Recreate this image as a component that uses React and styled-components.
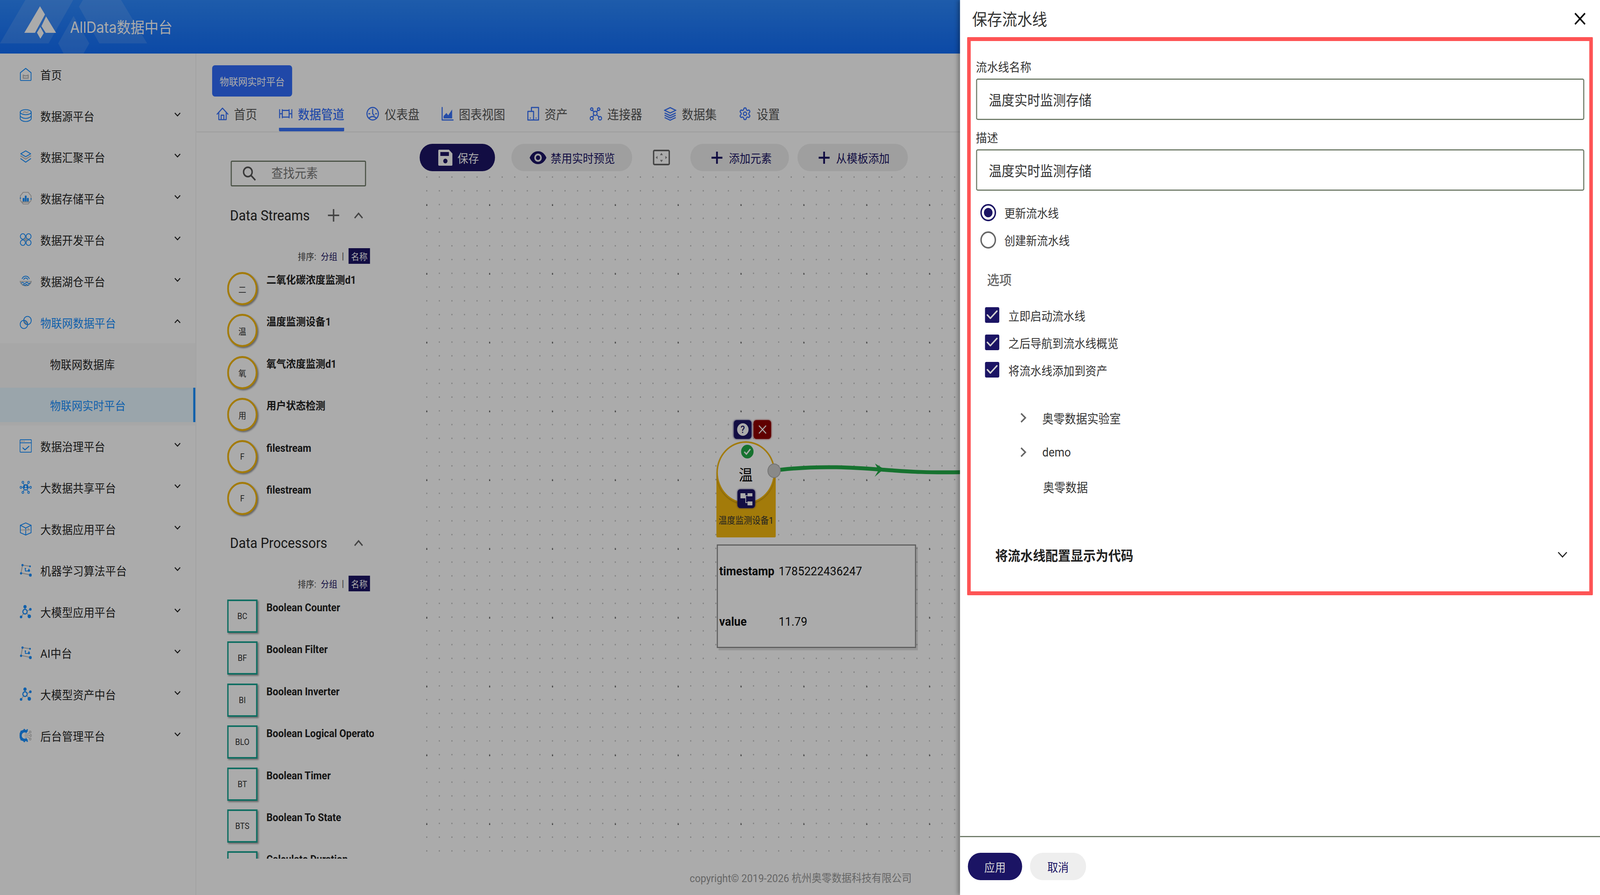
import React from 'react';
import styled, { createGlobalStyle } from 'styled-components';
import { Check, Settings } from 'lucide-react';

const BLUE = '#1890ff';
const GREY = '#bfbfbf';
const NAVY = '#1b1464';
const TAB = '#3a74fb';
const GOLD = '#f3b80f';
const TEAL = '#17a493';
const FIELD = '#6f7b68';
const SANS = 'Roboto, "Noto Sans CJK SC", sans-serif';
const DESIGN_WIDTH = 4480;

const Global = createGlobalStyle`
  html, body { margin: 0; padding: 0; background: #fff; overflow: hidden; }
  * { box-sizing: border-box; }
  body { font-family: ${SANS}; color: #262626; }
`;

const Root = styled.div`
  position: relative; width: ${DESIGN_WIDTH}px; height: 2290px; overflow: hidden;
  transform-origin: left top;
  display: flex; flex-direction: column; background: #fff;
`;
const Overlay = styled.div`
  position: absolute; inset: 0; background: rgba(0, 0, 0, 0.33);
`;

/* header */
const Header = styled.header`
  position: relative; flex: none; height: 137px; display: flex; align-items: center;
  background: linear-gradient(180deg, #2d89ff 0%, #126ef8 100%); overflow: hidden;
`;
const HeaderArt = styled.svg`
  position: absolute; left: 0; top: 0; width: 520px; height: 137px;
`;
const Brand = styled.div`
  position: relative; margin-left: 196px; margin-top: -4px; font-family: Inter, "Noto Sans CJK SC", sans-serif;
  font-size: 39px; color: #fff; white-space: nowrap;
`;

/* layout */
const Body = styled.div` flex: 1; min-height: 0; display: flex; `;
const Sidebar = styled.nav`
  flex: none; width: 550px; border-right: 3px solid #f5f5f5; background: #fff;
`;
const MenuRow = styled.div`
  height: 105.8px; padding: 0 41px 0 55px; display: flex; align-items: center; gap: 24px;
  font-size: 30px; letter-spacing: 0.3px; color: ${p => (p.$open ? BLUE : '#262626')};
`;
const MenuIconBox = styled.svg`
  flex: none; width: 34px; height: 34px; fill: none; stroke-width: 2.2;
  stroke-linecap: round; stroke-linejoin: round;
`;
const MenuLabel = styled.span` flex: 1; `;
const MenuCaret = styled.svg`
  flex: none; width: 18px; height: 10px; margin-bottom: 6px; fill: none; stroke: #262626; stroke-width: 2.6;
`;
const SubMenu = styled.div`
  height: 211px; padding: 9px 0 0; background: #fafafa; display: flex; flex-direction: column; gap: 17px;
`;
const SubItem = styled.div`
  height: 88px; padding-left: 140px; display: flex; align-items: center; font-size: 30px; letter-spacing: 0.3px;
  color: ${p => (p.$active ? BLUE : '#262626')};
  background: ${p => (p.$active ? '#e6f7ff' : 'transparent')};
  border-right: 6px solid ${p => (p.$active ? BLUE : 'transparent')};
`;

const Main = styled.main` flex: 1; min-width: 0; display: flex; flex-direction: column; `;
const Chip = styled.div`
  flex: none; align-self: flex-start; margin: 30px 0 0 44px; width: 224px; height: 80px; border-radius: 8px;
  background: #306cfb; color: #fff; font-size: 26px; display: flex; align-items: center; justify-content: center;
`;
const TabBar = styled.div`
  flex: none; height: 92px; padding-left: 56px; display: flex; gap: 61px; border-bottom: 3px solid #f0f0f0;
`;
const Tab = styled.div`
  display: flex; align-items: center; gap: 15px; padding-top: 7px; font-size: 32.5px;
  font-weight: ${p => (p.$active ? 500 : 400)};
  color: ${p => (p.$active ? TAB : '#555')};
  border-bottom: 9px solid ${p => (p.$active ? TAB : 'transparent')};
  border-radius: 0 0 3px 3px;
`;
const TabIconBox = styled.svg`
  flex: none; width: ${p => p.$w || 36}px; height: 36px; fill: none; stroke: ${TAB}; stroke-width: 3;
  stroke-linecap: round; stroke-linejoin: round;
`;

const Workspace = styled.div` flex: 1; min-height: 0; display: flex; `;
const Palette = styled.aside`
  flex: none; width: 625px; padding: 72px 0 0 86px; display: flex; flex-direction: column;
`;
const SearchBox = styled.label`
  flex: none; margin-left: 10px; width: 379px; height: 66px; border: 3px solid ${FIELD}; border-radius: 4px;
  display: flex; align-items: center; gap: 41px; padding-left: 30px; color: #555;
`;
const SearchInput = styled.input`
  width: 220px; border: 0; outline: 0; background: none; font: 32.5px ${SANS}; color: #777;
  &::placeholder { color: #777; }
`;
const SectionHead = styled.div`
  flex: none; height: 60px; margin: ${p => p.$top}px 0 0 8px; width: 373px; display: flex; align-items: center;
  color: #666;
`;
const SectionTitle = styled.h3`
  flex: 1; margin: 0; font-size: 37px; font-weight: 400; color: #262626; white-space: nowrap;
`;
const GlyphSvg = styled.svg`
  flex: none; display: block; fill: none; stroke: currentColor; margin-right: ${p => p.$gap || 0}px;
`;
const SortRow = styled.div`
  flex: none; height: 40px; margin: 54px 0 0; width: 400px; display: flex; align-items: center; justify-content: flex-end;
  gap: 13px; font-size: 23px; color: #444;
`;
const SortLink = styled.span` color: ${NAVY}; `;
const SortActive = styled.span`
  height: 40px; padding: 0 7px; display: flex; align-items: center; background: ${NAVY}; color: #fff;
`;
const ElementList = styled.div`
  flex: none; width: 411px; margin-top: 21px; overflow: hidden; height: ${p => p.$h}px;
`;
const Element = styled.div`
  display: flex; gap: 25px; height: 107.4px; padding-bottom: 22px;
`;
const Thumb = styled.div`
  flex: none; width: 85px; height: 85px; display: flex; align-items: center; justify-content: center;
  font-size: 22px; color: #333; background: #fff;
  border: ${p => (p.$round ? `5px solid ${GOLD}` : `4px solid ${TEAL}`)};
  border-radius: ${p => (p.$round ? '50%' : '0')};
  box-shadow: 3px 3px 4px rgba(0, 0, 0, 0.4);
`;
const ElementName = styled.div`
  flex: 1; min-width: 0; line-height: 42px; font-size: 27.5px; font-weight: 700;
  color: #222; white-space: nowrap; overflow: hidden;
`;

const Stage = styled.section` flex: 1; min-width: 0; display: flex; flex-direction: column; padding-top: 29px; `;
const Toolbar = styled.div` flex: none; display: flex; align-items: center; height: 70px; `;
const ToolBtn = styled.div`
  flex: none; height: 70px; border-radius: 35px; display: flex; align-items: center; white-space: nowrap;
  font-size: 30px; color: ${p => (p.$primary ? '#fff' : NAVY)};
  background: ${p => (p.$primary ? NAVY : '#eeeeee')};
  padding: ${p => p.$pad}; gap: ${p => p.$gap}px; margin-left: ${p => p.$ml || 0}px;
`;
const FitIcon = styled.svg` flex: none; margin: 0 57px 0 58px; `;
const Canvas = styled.div`
  position: relative; flex: 1; min-height: 0; margin: 7px 0 0 15px;
  background-image:
    radial-gradient(circle, #666 0, #666 1.6px, transparent 2.2px),
    radial-gradient(circle, #bbb 0, #bbb 1.5px, transparent 2px);
  background-size: 176px 176px, 35.2px 35.2px;
  background-position: -83px -8px, -12.6px -9.6px;
`;
const Edge = styled.svg`
  position: absolute; left: 990px; top: 725px; width: 520px; height: 70px; overflow: visible;
`;
const NodeWrap = styled.div`
  position: absolute; left: 816px; top: 630px; width: 166px;
  display: flex; flex-direction: column;
`;
const NodeActions = styled.div` display: flex; gap: 6px; margin-left: 49px; `;
const NodeBtn = styled.div`
  width: 49px; height: 48px; border-radius: 8px; display: flex; align-items: center; justify-content: center;
  background: ${p => p.$bg}; box-shadow: 0 0 5px ${p => p.$bg};
`;
const HelpDot = styled.span`
  width: 32px; height: 32px; border-radius: 50%; background: #fff; color: ${NAVY};
  font-size: 25px; font-weight: 500; display: flex; align-items: center; justify-content: center;
`;
const NodeBody = styled.div`
  position: relative; margin-top: 6px; height: 246px; border-radius: 0 0 3px 3px;
  background: linear-gradient(180deg, transparent 80px, ${GOLD} 80px);
`;
const NodeCircle = styled.div`
  position: absolute; left: 0; top: 0; width: 164px; height: 160px; border-radius: 50%;
  border: 4px solid ${GOLD}; background: #fff; box-shadow: 0 2px 3px rgba(0, 0, 0, 0.25);
  display: flex; align-items: center; justify-content: center; font-size: 39px; color: #000; padding-top: 6px;
`;
const NodeStatus = styled.svg` position: absolute; left: 65px; top: 5px; width: 35px; height: 35px; `;
const NodeTree = styled(NodeBtn)` position: absolute; left: 59px; top: 123px; `;
const NodePort = styled.div`
  position: absolute; left: 143px; top: 57px; width: 37px; height: 37px; border-radius: 50%;
  background: #ccc; border: 2px solid #aaa;
`;
const NodeLabel = styled.div`
  position: absolute; left: 0; right: 0; bottom: 28px; text-align: center; font-size: 23.5px; color: #333; white-space: nowrap;
`;
const DataBox = styled.div`
  position: absolute; left: 817px; top: 948px; width: 558px; height: 265px; padding: 0 4px;
  border: 3px solid #8e8e8e; box-shadow: 5px 6px 0 rgba(0, 0, 0, 0.12); background: #fff;
  display: grid; grid-template-columns: 166px 1fr; align-content: space-around; align-items: center;
  font-size: 32px; color: #111;
`;
const DataKey = styled.span` font-weight: 700; `;
const DataVal = styled.span``;
const Copyright = styled.div`
  flex: none; height: 91px; padding: 0 0 0 1381px; display: flex; align-items: center; font-size: 28px; color: #999; white-space: nowrap;
`;

/* drawer */
const Drawer = styled.aside`
  position: absolute; left: 2688px; top: 0; bottom: 0; width: 1792px; background: #fff;
  box-shadow: -6px 0 10px rgba(0, 0, 0, 0.3); display: flex; flex-direction: column;
`;
const DrawerHead = styled.div`
  flex: none; height: 95px; padding: 0 40px 0 34px; display: flex; align-items: center; justify-content: space-between;
  color: #000;
`;
const DrawerTitle = styled.h2` margin: -2px 0 0; font-size: 42px; font-weight: 400; color: #333; `;
const Highlight = styled.div`
  flex: none; height: 1428px; margin: 0 20px 0 19.5px; padding: 48px 14px 0 15px;
  border: 10px solid #fe5455; border-radius: 2px;
`;
const FieldLabel = styled.div`
  height: 40px; line-height: 40px; font-size: 31px; color: #333; margin-top: ${p => p.$top || 0}px;
`;
const FieldInput = styled.input`
  display: block; width: 100%; height: 106px; margin-top: 8px; padding: 0 33px; border: 3px solid ${FIELD}; border-radius: 5px;
  font: 36px ${SANS}; color: #333; background: #fff; outline: 0;
`;
const RadioGroup = styled.div` margin-top: 21px; `;
const RadioRow = styled.div`
  height: 70px; display: flex; align-items: center; gap: 23px; padding-left: 12.5px; font-size: 30.5px; color: #333;
`;
const RadioMark = styled.span`
  flex: none; width: 44px; height: 44px; border-radius: 50%; border: 4px solid ${p => (p.$on ? NAVY : '#666')};
  display: flex; align-items: center; justify-content: center;
  &::after { content: ''; width: 24px; height: 24px; border-radius: 50%; background: ${p => (p.$on ? NAVY : 'transparent')}; }
`;
const OptionsTitle = styled.div`
  height: 44px; line-height: 44px; margin: 46px 0 32px; padding-left: 31px; font-size: 34.5px; font-weight: 500; color: #666;
`;
const CheckRow = styled.div`
  height: 70px; display: flex; align-items: center; gap: 25.5px; padding-left: 25.5px; font-size: 30.8px; color: #333;
`;
const CheckMark = styled.span`
  flex: none; width: 40px; height: 40px; border-radius: 4px; background: ${NAVY}; color: #d0d0d0;
  display: flex; align-items: center; justify-content: center;
`;
const Tree = styled.div` margin-top: 44px; color: #666; `;
const TreeRow = styled.div`
  height: 88px; display: flex; align-items: center; gap: 42px; padding-left: ${p => p.$pad}px; font-size: 31.4px;
`;
const TreeText = styled.span` color: #333; `;
const Accordion = styled.div`
  height: 100px; margin-top: 80px; padding: 0 47px 0 54px; display: flex; align-items: center; justify-content: space-between;
  font-size: 35.2px; font-weight: 700; color: #222;
`;
const Spacer = styled.div` flex: 1; `;
const DrawerFoot = styled.div`
  flex: none; height: 151px; padding-top: 40px; padding-left: 22px; border-top: 3px solid ${FIELD}; display: flex; gap: 22px;
`;
const FootBtn = styled.div`
  width: ${p => p.$w}px; height: 70px; border-radius: 35px; display: flex; align-items: center; justify-content: center;
  font-size: 30px; background: ${p => (p.$primary ? NAVY : '#eeeeee')}; color: ${p => (p.$primary ? '#d8d8d8' : NAVY)};
`;

const Cross = ({ size = 32, weight = 4, gap = 0 }) => (
  <GlyphSvg width={size} height={size} viewBox="0 0 32 32" strokeWidth={(weight * 32) / size} $gap={gap}>
    <path d="M16 0v32M0 16h32" />
  </GlyphSvg>
);
const Times = ({ size = 32, weight = 4 }) => (
  <GlyphSvg width={size} height={size} viewBox="0 0 32 32" strokeWidth={(weight * 32) / size}>
    <path d="M2 2l28 28M30 2 2 30" />
  </GlyphSvg>
);
const CaretUp = () => (
  <GlyphSvg width="26" height="17" viewBox="0 0 26 17" strokeWidth="3.600"><path d="M2 15 13 3l11 12" /></GlyphSvg>
);
const TreeCaret = () => (
  <GlyphSvg width="24" height="26" viewBox="0 0 24 26" strokeWidth="4"><path d="M6 2l12 11L6 24" /></GlyphSvg>
);

const menuIcons = {
  home: <><path d="M2 13 17 2l15 11v18a2 2 0 0 1-2 2H4a2 2 0 0 1-2-2z" stroke={BLUE} /><path d="M10 19q7 4 14 0v8H10z" stroke={GREY} strokeWidth="3" /></>,
  db: <><ellipse cx="17" cy="8" rx="15.500" ry="6.500" stroke={BLUE} /><path d="M1.500 8v16c0 4 7 8 15.500 8s15.500-4 15.500-8V8M1.500 16c0 4 7 8 15.500 8s15.500-4 15.500-8" stroke={BLUE} /><path d="M10 9q3.500-3 7-1t7-1" stroke={GREY} /></>,
  layers: <><path d="M17 2 31 9.500 17 17 3 9.500z" stroke={BLUE} /><path d="M3 15l14 8 14-8" stroke={GREY} strokeWidth="3" /><path d="M3 22l14 9 14-9" stroke={BLUE} /></>,
  bars: <><path d="M10 2h14l8 9v12l-8 9H10l-8-9V11z" stroke={GREY} /><path d="M9 25v-8h4v8zm6 0V11h4v14zm6 0v-8h4v8z" fill={BLUE} stroke={BLUE} strokeWidth="1" /><path d="M7 27h20" stroke={GREY} strokeWidth="3" /><circle cx="2" cy="17" r="1.800" fill={BLUE} stroke="none" /><circle cx="32" cy="19" r="1.800" fill={BLUE} stroke="none" /></>,
  dev: <><circle cx="9" cy="9" r="7" stroke={BLUE} /><circle cx="25" cy="9" r="7" stroke={BLUE} /><circle cx="9" cy="25" r="7" stroke={BLUE} /><circle cx="25" cy="25" r="7" stroke={BLUE} /><path d="M17 12v10M12 17h10" stroke={GREY} strokeWidth="2.600" /></>,
  lake: <><path d="M7 11a11 11 0 0 1 20 0M11.500 13a6 6 0 0 1 11 0" stroke={BLUE} /><path d="M1.500 18a16 15 0 0 0 31 0" stroke={GREY} strokeWidth="3" /><path d="M2 18h30" stroke={GREY} strokeWidth="2" /><path d="M5 22q3-3 6 0t6 0 6 0 6 0M9 27q2-2 4 0t4 0 4 0 4 0" stroke={BLUE} /></>,
  iot: <><path d="M13.500 13a9 9 0 0 1 8 8 9 9 0 0 1-8-8z" fill={GREY} stroke={GREY} /><circle cx="12" cy="22" r="10.500" stroke={BLUE} /><circle cx="22" cy="12" r="10.500" stroke={BLUE} /></>,
  gov: <><rect x="1" y="1" width="32" height="32" rx="2" stroke={BLUE} /><path d="M1 9h32" stroke={BLUE} /><path d="M5 5h.1M9 5h.1M13 5h.1" stroke={GREY} strokeWidth="2.600" /><path d="M9 22l6 5 11-9" stroke={BLUE} strokeWidth="2.600" /></>,
  share: <><path d="M17 17 4 17M17 17 30 17M17 17 9 5M17 17 25 5M17 17 9 29M17 17 25 29" stroke={BLUE} strokeWidth="1.600" /><circle cx="17" cy="17" r="8" fill={BLUE} stroke="none" /><circle cx="17" cy="14.500" r="2.500" fill="#fff" stroke="none" /><path d="M12.500 22c.5-3 2.500-4 4.500-4s4 1 4.500 4z" fill="#fff" stroke="none" /><g fill="#fff" stroke={BLUE} strokeWidth="1.800"><circle cx="3.500" cy="17" r="2.500" /><circle cx="30.500" cy="17" r="2.500" /><circle cx="9" cy="4" r="2.500" /><circle cx="25" cy="4" r="2.500" /><circle cx="9" cy="30" r="2.500" /><circle cx="25" cy="30" r="2.500" /></g></>,
  cube: <><path d="M17 2 32 8v19l-15 6-15-6V8z" stroke={BLUE} /><path d="M2 8l15 7 15-7M17 15v18" stroke={BLUE} /><path d="M4 20h24l-5-4" stroke={GREY} /></>,
  ml: <><path d="M8 4l22 3M8 4 4 24l26 5" stroke={GREY} strokeWidth="2.600" /><path d="M16 13v6h10v-5" stroke={BLUE} /><g fill={BLUE} stroke="none"><circle cx="8" cy="4" r="3" /><circle cx="29" cy="7" r="2.500" /><circle cx="4" cy="25" r="3" /><circle cx="30" cy="29.500" r="4" /><circle cx="16" cy="13" r="2" /><circle cx="26" cy="18" r="3" /></g></>,
  llm: <><path d="M14 17 5 30M17 17 27 29M16 17 29 12M15 5v12" stroke={GREY} strokeWidth="2.200" /><circle cx="15" cy="17" r="6" fill="#fff" stroke={BLUE} strokeWidth="3" /><g fill={BLUE} stroke="none"><circle cx="15" cy="4.500" r="4.500" /><circle cx="30" cy="11" r="3.500" /><circle cx="4" cy="30.500" r="3.500" /><circle cx="27" cy="29" r="4.800" /></g></>,
  admin: <><path d="M21 8a11.500 11.500 0 1 0 0 18" stroke={BLUE} strokeWidth="7" strokeLinecap="butt" /><g stroke={BLUE} strokeWidth="3.500" strokeLinecap="butt"><path d="M13 0v3M3 5l2.500 2.500M0 17h3M3 29l2.500-2.500M13 34v-3M22 1l-1.500 3M22 33l-1.500-3" /></g><path d="M15 13h10l2-4M14 17h14M15 21h10l2 4" stroke={GREY} strokeWidth="1.600" /><g stroke={GREY} strokeWidth="1.800"><circle cx="29.500" cy="8" r="2.500" /><circle cx="31" cy="17" r="2.500" /><circle cx="29.500" cy="26" r="2.500" /></g></>,
};

const tabIcons = {
  home: <TabIconBox viewBox="0 0 36 36" $w={34}><path d="M2 19 18 3l16 16M7 15v19h22V15M14 34V22h8v12" /></TabIconBox>,
  pipe: <TabIconBox viewBox="0 0 40 36" $w={38}><path d="M2 6v24M10 6v24M10 9h20M10 27h20M30 6v24M38 6v24M10 18H2M30 18h8" strokeLinecap="butt" /></TabIconBox>,
  dash: <TabIconBox viewBox="0 0 36 36" $w={37}><circle cx="18" cy="18" r="16" /><path d="M18 7v11l4 4M7 18h3M26 18h3M8 29q10-8 20 0" /></TabIconBox>,
  chart: <TabIconBox viewBox="0 0 34 36" $w={34}><path d="M2 2v32h31" /><path d="M6 30v-6l8-8 5 6 11-15v23z" fill={TAB} stroke="none" /></TabIconBox>,
  asset: <TabIconBox viewBox="0 0 34 36" $w={34}><path d="M12 10V2h20v32H2V12h16v22" /><path d="M9 29h.1M25 29h.1" /></TabIconBox>,
  hub: <TabIconBox viewBox="0 0 36 36" $w={35}><circle cx="6" cy="6" r="3.500" /><circle cx="26" cy="6" r="3.500" /><circle cx="6" cy="30" r="4.500" /><circle cx="30" cy="30" r="4.500" /><circle cx="16" cy="17" r="5.500" /><path d="M8 8.500l4 4.500M24 8.500l-4 4.500M9 27l3-6M27 27l-6-6" /></TabIconBox>,
  data: <TabIconBox viewBox="0 0 36 36" $w={35}><path d="M18 2 34 9 18 16 2 9zM2 16l16 7 16-7M2 22l16 7 16-7M2 28l16 7 16-7" strokeLinecap="butt" strokeLinejoin="miter" /></TabIconBox>,
  gear: <Settings size={36} color={TAB} strokeWidth={2} />,
};

const menuTop = [
  ['home', '首页', false], ['db', '数据源平台', true], ['layers', '数据汇聚平台', true], ['bars', '数据存储平台', true],
  ['dev', '数据开发平台', true], ['lake', '数据湖仓平台', true],
];
const menuBottom = [
  ['gov', '数据治理平台'], ['share', '大数据共享平台'], ['cube', '大数据应用平台'], ['ml', '机器学习算法平台'],
  ['llm', '大模型应用平台'], ['ml', 'AI中台'], ['llm', '大模型资产中台'], ['admin', '后台管理平台'],
];
const tabs = [
  ['home', '首页'], ['pipe', '数据管道', true], ['dash', '仪表盘'], ['chart', '图表视图'], ['asset', '资产'],
  ['hub', '连接器'], ['data', '数据集'], ['gear', '设置'],
];
const streams = [
  ['二', '二氧化碳浓度监测d1'], ['温', '温度监测设备1'], ['氧', '氧气浓度监测d1'], ['用', '用户状态检测'], ['F', 'filestream'], ['F', 'filestream'],
];
const processors = [
  ['BC', 'Boolean Counter'], ['BF', 'Boolean Filter'], ['BI', 'Boolean Inverter'], ['BLO', 'Boolean Logical Operator'],
  ['BT', 'Boolean Timer'], ['BTS', 'Boolean To State'], ['CD', 'Calculate Duration'],
];

function MenuItem({ icon, label, caret = true, open = false }) {
  return (
    <MenuRow $open={open}>
      <MenuIconBox viewBox="0 0 34 34">{menuIcons[icon]}</MenuIconBox>
      <MenuLabel>{label}</MenuLabel>
      {caret && (
        <MenuCaret viewBox="0 0 18 10"><path d={open ? 'M1.500 9 9 1.500 16.500 9' : 'M1.500 1 9 8.500 16.500 1'} /></MenuCaret>
      )}
    </MenuRow>
  );
}

function SortBar() {
  return (
    <SortRow>
      <span>排序:</span><SortLink>分组</SortLink><span>|</span><SortActive>名称</SortActive>
    </SortRow>
  );
}

export default function App() {
  const fit = Math.min(1, window.innerWidth / DESIGN_WIDTH);
  return (
    <Root style={{ transform: `scaleX(${fit})` }}>
      <Global />
      <Header>
        <HeaderArt viewBox="0 0 520 137">
          <g fill="#fff" fillOpacity="0.12">
            <path d="M71 0h134l-69 111H0z" />
            <path d="M232 0h107l73 111H278l-57-94z" />
            <path d="M206 41l44 70-16 26h-56l-15-26z" />
          </g>
          <g fill="#fff">
            <path d="M112 16l14 21-28 47H68z" />
            <path d="M129 42l28 42h-29l-12-17z" />
            <path d="M113 69l9.500 16-9.500 14-9.500-15.500z" />
          </g>
        </HeaderArt>
        <Brand>AllData数据中台</Brand>
      </Header>
      <Body>
        <Sidebar>
          {menuTop.map(([i, l, c]) => <MenuItem key={l} icon={i} label={l} caret={c} />)}
          <MenuItem icon="iot" label="物联网数据平台" open />
          <SubMenu>
            <SubItem>物联网数据库</SubItem>
            <SubItem $active>物联网实时平台</SubItem>
          </SubMenu>
          {menuBottom.map(([i, l]) => <MenuItem key={l} icon={i} label={l} />)}
        </Sidebar>
        <Main>
          <Chip>物联网实时平台</Chip>
          <TabBar>
            {tabs.map(([i, l, a]) => <Tab key={l} $active={a}>{tabIcons[i]}{l}</Tab>)}
          </TabBar>
          <Workspace>
            <Palette>
              <SearchBox>
                <GlyphSvg width="38" height="38" viewBox="0 0 38 38" strokeWidth="4"><circle cx="15" cy="15" r="12" /><path d="M24 24l12 12" /></GlyphSvg>
                <SearchInput placeholder="查找元素" />
              </SearchBox>
              <SectionHead $top={44}>
                <SectionTitle>Data Streams</SectionTitle>
                <Cross size={32} weight={4} gap={41} />
                <CaretUp />
              </SectionHead>
              <SortBar />
              <ElementList $h={645}>
                {streams.map(([t, n], i) => (
                  <Element key={i}><Thumb $round>{t}</Thumb><ElementName>{n}</ElementName></Element>
                ))}
              </ElementList>
              <SectionHead $top={18}>
                <SectionTitle>Data Processors</SectionTitle>
                <CaretUp />
              </SectionHead>
              <SortBar />
              <ElementList $h={663}>
                {processors.map(([t, n]) => (
                  <Element key={t}><Thumb>{t}</Thumb><ElementName>{n}</ElementName></Element>
                ))}
              </ElementList>
            </Palette>
            <Stage>
              <Toolbar>
                <ToolBtn $primary $pad="0 45px 0 52px" $gap={14}>
                  <svg width="40" height="41" viewBox="0 0 40 41">
                    <path d="M3 0h27l10 10v28a3 3 0 0 1-3 3H3a3 3 0 0 1-3-3V3a3 3 0 0 1 3-3z" fill="#fff" />
                    <rect x="6" y="6" width="24" height="10" fill={NAVY} />
                    <circle cx="20" cy="29" r="6" fill={NAVY} />
                  </svg>
                  保存
                </ToolBtn>
                <ToolBtn $pad="0 48px 0 51px" $gap={12} $ml={46}>
                  <svg width="47" height="33" viewBox="0 0 47 33">
                    <path d="M0 16.500C5 6 13 0 23.500 0S42 6 47 16.500C42 27 34 33 23.500 33S5 27 0 16.500z" fill={NAVY} />
                    <circle cx="23.500" cy="16.500" r="10.500" fill="#eee" />
                    <circle cx="23.500" cy="16.500" r="6" fill={NAVY} />
                  </svg>
                  禁用实时预览
                </ToolBtn>
                <FitIcon width="48" height="40" viewBox="0 0 48 40">
                  <rect x="2" y="2" width="44" height="36" rx="3" fill="none" stroke="#666" strokeWidth="4" />
                  <path d="M24 8l4 6h-8zM24 32l-4-6h8zM8 20l5-4v8zM40 20l-5-4v8z" fill="#888" />
                </FitIcon>
                <ToolBtn $pad="0 48px 0 59px" $gap={18}>
                  <Cross size={31} weight={5} />
                  添加元素
                </ToolBtn>
                <ToolBtn $pad="0 51px 0 59px" $gap={18} $ml={24}>
                  <Cross size={31} weight={5} />
                  从模板添加
                </ToolBtn>
              </Toolbar>
              <Canvas>
                <Edge viewBox="0 0 520 70">
                  <path d="M5 32C120 20 220 27 295 32S420 40 520 38" fill="none" stroke="#21aa47" strokeWidth="10" />
                  <path d="M295 30 270 16 280 33 269 50z" fill="#21aa47" />
                </Edge>
                <NodeWrap>
                  <NodeActions>
                    <NodeBtn $bg={NAVY}><HelpDot>?</HelpDot></NodeBtn>
                    <NodeBtn $bg="#8f0000"><svg width="24" height="24" viewBox="0 0 24 24" fill="none" stroke="#fff" strokeWidth="2.500"><path d="M2 2l20 20M22 2 2 22" /></svg></NodeBtn>
                  </NodeActions>
                  <NodeBody>
                    <NodeCircle>
                      温
                      <NodeStatus viewBox="0 0 35 35">
                        <circle cx="17.500" cy="17.500" r="17.500" fill="#21aa47" />
                        <path d="M9 18l6 6 11-13" fill="none" stroke="#fff" strokeWidth="3.500" />
                      </NodeStatus>
                    </NodeCircle>
                    <NodeTree $bg={NAVY}>
                      <svg width="34" height="34" viewBox="0 0 34 34" fill="#fff">
                        <rect x="0" y="3" width="14" height="13" /><rect x="20" y="3" width="14" height="8" />
                        <rect x="20" y="24" width="14" height="10" /><path d="M14 8h6v2h-4v16h4v2h-6z" />
                      </svg>
                    </NodeTree>
                    <NodePort />
                    <NodeLabel>温度监测设备1</NodeLabel>
                  </NodeBody>
                </NodeWrap>
                <DataBox>
                  <DataKey>timestamp</DataKey><DataVal>1785222436247</DataVal>
                  <DataKey>value</DataKey><DataVal>11.79</DataVal>
                </DataBox>
              </Canvas>
            </Stage>
          </Workspace>
          <Copyright>copyright© 2019-2026 杭州奥零数据科技有限公司</Copyright>
        </Main>
      </Body>
      <Overlay />
      <Drawer>
        <DrawerHead>
          <DrawerTitle>保存流水线</DrawerTitle>
          <Times size={32} weight={4} />
        </DrawerHead>
        <Highlight>
          <FieldLabel>流水线名称</FieldLabel>
          <FieldInput value="温度实时监测存储" readOnly />
          <FieldLabel $top={27}>描述</FieldLabel>
          <FieldInput value="温度实时监测存储" readOnly />
          <RadioGroup>
            <RadioRow><RadioMark $on />更新流水线</RadioRow>
            <RadioRow><RadioMark />创建新流水线</RadioRow>
          </RadioGroup>
          <OptionsTitle>选项</OptionsTitle>
          {['立即启动流水线', '之后导航到流水线概览', '将流水线添加到资产'].map(t => (
            <CheckRow key={t}><CheckMark><Check size={44} strokeWidth={2.4} /></CheckMark>{t}</CheckRow>
          ))}
          <Tree>
            <TreeRow $pad={120}><TreeCaret /><TreeText>奥零数据实验室</TreeText></TreeRow>
            <TreeRow $pad={120}><TreeCaret /><TreeText>demo</TreeText></TreeRow>
            <TreeRow $pad={188}><TreeText>奥零数据</TreeText></TreeRow>
          </Tree>
          <Accordion>
            将流水线配置显示为代码
            <GlyphSvg width="28" height="16" viewBox="0 0 28 16" strokeWidth="3"><path d="M2 2l12 12L26 2" /></GlyphSvg>
          </Accordion>
        </Highlight>
        <Spacer />
        <DrawerFoot>
          <FootBtn $primary $w={152}>应用</FootBtn>
          <FootBtn $w={157}>取消</FootBtn>
        </DrawerFoot>
      </Drawer>
    </Root>
  );
}
